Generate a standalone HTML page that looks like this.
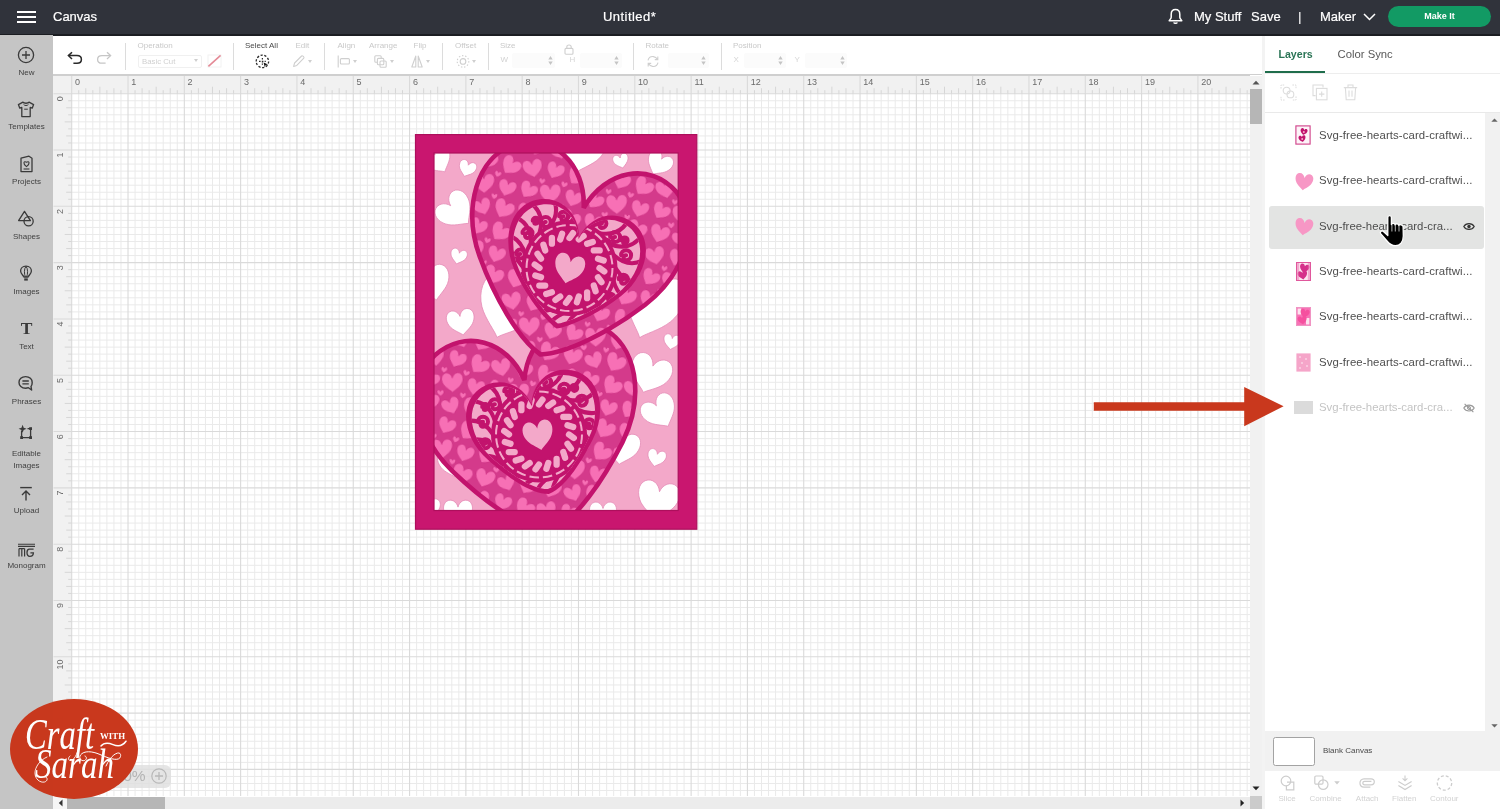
<!DOCTYPE html>
<html>
<head>
<meta charset="utf-8">
<title>Canvas</title>
<style>
*{box-sizing:border-box;margin:0;padding:0}
html,body{width:1500px;height:809px;overflow:hidden;background:#fff;font-family:"Liberation Sans",sans-serif;}
.abs{position:absolute}
body>*{will-change:transform;opacity:0.999}
#topbar{position:absolute;left:0;top:0;width:1500px;height:35.6px;background:#30333b;border-bottom:2px solid #1b1d22}
#topbar .t{position:absolute;color:#fff;-webkit-text-stroke:0.2px #fff;font-size:13px;line-height:16px;white-space:nowrap;top:8.6px}
#sidebar{position:absolute;left:0;top:35px;width:53px;height:774px;background:#c5c5c5}
.sbl{position:absolute;left:0;width:53px;text-align:center;font-size:8px;line-height:10px;color:#3f3f3f}
.sbi{position:absolute;left:0;width:53px;text-align:center}
#toolbar{position:absolute;left:53px;top:36px;width:1210px;height:39px;background:#fff;border-bottom:1px solid #cfcfcf}
.tl{position:absolute;font-size:8px;line-height:9px;color:#c9c9c9;top:4.8px;white-space:nowrap}
.sep{position:absolute;top:7px;height:27px;width:1px;background:#dcdcdc}
.ti{position:absolute}
.car{position:absolute;width:0;height:0;border-left:2.3px solid transparent;border-right:2.3px solid transparent;border-top:3px solid #cfcfcf}
.spin{position:absolute;width:5px;height:11px}
#canvas{position:absolute;left:53px;top:75px;overflow:hidden}
#panel{position:absolute;left:1265px;top:36px;width:235px;height:773px;background:#fff}
.row{position:absolute;left:54px;font-size:11.4px;line-height:13px;color:#4e4e4e;white-space:nowrap}
.bl{position:absolute;font-size:8px;line-height:10px;color:#d2d2d2;top:758px;white-space:nowrap;text-align:center}
</style>
</head>
<body>
<div id="topbar">
<div class="abs" style="left:17px;top:10.5px;width:19px;height:2px;background:#fff"></div>
<div class="abs" style="left:17px;top:15.5px;width:19px;height:2px;background:#fff"></div>
<div class="abs" style="left:17px;top:20.5px;width:19px;height:2px;background:#fff"></div>
<div class="t" style="left:53px">Canvas</div>
<div class="t" style="left:603px;letter-spacing:0.45px">Untitled*</div>
<svg class="abs" style="left:1167px;top:8px" width="17" height="18" viewBox="0 0 17 18"><path d="M8.5 1.6 C5.6 1.6 4.2 3.8 4.2 6.4 V9.2 C4.2 10.6 2.6 11.6 2.2 12.8 H14.8 C14.4 11.6 12.8 10.6 12.8 9.2 V6.4 C12.8 3.8 11.4 1.6 8.5 1.6 Z" fill="none" stroke="#fff" stroke-width="1.5" stroke-linejoin="round"/><path d="M6.8 14.3 C7 15.6 10 15.6 10.2 14.3" fill="none" stroke="#fff" stroke-width="1.4"/></svg>
<div class="t" style="left:1194px">My Stuff</div>
<div class="t" style="left:1251px">Save</div>
<div class="t" style="left:1298px;color:#e6e6e6">|</div>
<div class="t" style="left:1320px">Maker</div>
<svg class="abs" style="left:1363px;top:13px" width="13" height="8" viewBox="0 0 13 8"><path d="M1 1 L6.5 6.5 L12 1" fill="none" stroke="#fff" stroke-width="1.5"/></svg>
<div class="abs" style="left:1388px;top:6px;width:103px;height:21px;border-radius:11px;background:#129a64;color:#fff;font-size:9px;font-weight:bold;line-height:21px;text-align:center">Make It</div>
</div>
<div id="sidebar">
<svg class="abs" style="left:16px;top:9.5px" width="20" height="20" viewBox="0 0 20 20"><circle cx="10" cy="10" r="7.6" fill="none" stroke="#3a3a3a" stroke-width="1.3"/><path d="M10 6 V14 M6 10 H14" stroke="#3a3a3a" stroke-width="1.3"/></svg>
<div class="sbl" style="top:32.7px">New</div>
<svg class="abs" style="left:17px;top:65.5px" width="18" height="17" viewBox="0 0 18 17"><path d="M6 1.2 C7 2.6 11 2.6 12 1.2 L16.6 3.6 L15.2 7.2 L13.2 6.4 V15.6 H4.8 V6.4 L2.8 7.2 L1.4 3.6 Z" fill="none" stroke="#3a3a3a" stroke-width="1.3" stroke-linejoin="round"/><path d="M6.5 3.2 C7.5 5 10.5 5 11.5 3.2" fill="none" stroke="#3a3a3a" stroke-width="1"/><path d="M7.2 8.2 H10.8" stroke="#3a3a3a" stroke-width="1"/></svg>
<div class="sbl" style="top:87px">Templates</div>
<svg class="abs" style="left:19px;top:120px" width="15" height="18" viewBox="0 0 15 18"><path d="M2 3.2 L10 1.2 L13 3.2 V16.6 H2 Z" fill="none" stroke="#3a3a3a" stroke-width="1.3" stroke-linejoin="round"/><path d="M7.5 11.6 C3.6 8.8 4.6 5.6 7.5 7.2 C10.4 5.6 11.4 8.8 7.5 11.6 Z" fill="none" stroke="#3a3a3a" stroke-width="1.1"/><path d="M4.6 14 H10.4" stroke="#3a3a3a" stroke-width="1.1"/></svg>
<div class="sbl" style="top:141.6px">Projects</div>
<svg class="abs" style="left:17px;top:175px" width="18" height="17" viewBox="0 0 18 17"><path d="M7.5 1.4 L13.4 10.6 H1.6 Z" fill="none" stroke="#3a3a3a" stroke-width="1.3" stroke-linejoin="round"/><circle cx="11.6" cy="11.2" r="4.6" fill="none" stroke="#3a3a3a" stroke-width="1.3"/></svg>
<div class="sbl" style="top:196.5px">Shapes</div>
<svg class="abs" style="left:19px;top:230px" width="14" height="17" viewBox="0 0 14 17"><path d="M7 1.2 C3.4 1.2 1.6 3.6 1.6 6 C1.6 8.6 4 10.2 5 12 H9 C10 10.2 12.4 8.6 12.4 6 C12.4 3.6 10.6 1.2 7 1.2 Z" fill="none" stroke="#3a3a3a" stroke-width="1.3"/><path d="M7 1.4 C5 3.4 5 9 6.4 12 M7 1.4 C9 3.4 9 9 7.6 12" fill="none" stroke="#3a3a3a" stroke-width="1"/><path d="M5.2 13.4 H8.8 V15.6 H5.2 Z" fill="#3a3a3a"/></svg>
<div class="sbl" style="top:251.8px">Images</div>
<div class="sbi" style="top:283px;font-family:'Liberation Serif',serif;font-size:17.5px;font-weight:bold;line-height:20px;color:#3a3a3a">T</div>
<div class="sbl" style="top:306.7px">Text</div>
<svg class="abs" style="left:17px;top:340px" width="18" height="17" viewBox="0 0 18 17"><path d="M8.6 1.6 C4.6 1.6 2 4.2 2 7.4 C2 10.6 4.6 13.2 8.6 13.2 C9.6 13.2 10.6 13 11.4 12.7 L14.6 15 L14 11.4 C14.8 10.4 15.2 9 15.2 7.4 C15.2 4.2 12.6 1.6 8.6 1.6 Z" fill="none" stroke="#3a3a3a" stroke-width="1.4" stroke-linejoin="round"/><path d="M5.4 6 H11.8 M5.4 8.8 H11.8" stroke="#3a3a3a" stroke-width="1.3"/></svg>
<div class="sbl" style="top:361.6px">Phrases</div>
<svg class="abs" style="left:17px;top:388.5px" width="18" height="18" viewBox="0 0 18 18"><path d="M4.6 6.5 V13.6 H13.6 V4.6 H10.5" fill="none" stroke="#3a3a3a" stroke-width="1.3"/><rect x="3.2" y="12.2" width="2.8" height="2.8" fill="#3a3a3a"/><rect x="12.2" y="12.2" width="2.8" height="2.8" fill="#3a3a3a"/><rect x="12.2" y="3.2" width="2.8" height="2.8" fill="#3a3a3a"/><path d="M5.6 0.8 L6.7 3.7 L9.6 4.8 L6.7 5.9 L5.6 8.8 L4.5 5.9 L1.6 4.8 L4.5 3.7 Z" fill="#3a3a3a"/></svg>
<div class="sbl" style="top:414.3px">Editable</div>
<div class="sbl" style="top:425.7px">Images</div>
<svg class="abs" style="left:18px;top:450.5px" width="16" height="16" viewBox="0 0 16 16"><path d="M2.2 1.6 H13.8" stroke="#3a3a3a" stroke-width="1.4"/><path d="M8 14.6 V5.4 M4 9 L8 5 L12 9" fill="none" stroke="#3a3a3a" stroke-width="1.4"/></svg>
<div class="sbl" style="top:470.5px">Upload</div>
<svg class="abs" style="left:17px;top:508px" width="19" height="15" viewBox="0 0 19 15"><path d="M1 1.2 H18 M1 3.4 H18" stroke="#3a3a3a" stroke-width="1.1"/><path d="M2 13.6 V5.4 M4.8 13.6 V5.4 M7.6 13.6 V5.4 M2 5.6 H7.6" fill="none" stroke="#3a3a3a" stroke-width="1.2"/><path d="M16.6 6.2 H12.4 C10.6 6.2 10 7.4 10 9.6 C10 12 10.8 13.4 12.8 13.4 C14.8 13.4 16.4 12.4 16.4 9.8 H13.4" fill="none" stroke="#3a3a3a" stroke-width="1.3"/></svg>
<div class="sbl" style="top:525.5px">Monogram</div>
</div>
<div id="toolbar">
<svg class="ti" style="left:14px;top:14.5px" width="16" height="14" viewBox="0 0 16 14"><path d="M1.6 4.6 H10 C12.6 4.6 14.4 6.2 14.4 8.4 C14.4 10.6 12.6 12.2 10 12.2 H6.4" fill="none" stroke="#2a2a2a" stroke-width="1.5"/><path d="M5 1.2 L1.4 4.6 L5 8" fill="none" stroke="#2a2a2a" stroke-width="1.5"/></svg>
<svg class="ti" style="left:43px;top:14.5px" width="16" height="14" viewBox="0 0 16 14"><path d="M14.4 4.6 H6 C3.4 4.6 1.6 6.2 1.6 8.4 C1.6 10.6 3.4 12.2 6 12.2 H9.6" fill="none" stroke="#c6c6c6" stroke-width="1.3"/><path d="M11 1.2 L14.6 4.6 L11 8" fill="none" stroke="#c6c6c6" stroke-width="1.3"/></svg>
<div class="sep" style="left:71.5px"></div>
<div class="tl" style="left:84.5px">Operation</div>
<div class="abs" style="left:85px;top:18.5px;width:64px;height:13.5px;border:1px solid #f0f0f0;border-radius:2px;font-size:7.8px;line-height:11px;color:#d0d0d0;padding-left:3px">Basic Cut</div>
<div class="car" style="left:141.1px;top:23.0px"></div>
<svg class="ti" style="left:154px;top:18px" width="15" height="14" viewBox="0 0 15 14"><rect x="1" y="1" width="13" height="12" fill="none" stroke="#f2f2f2" stroke-width="1"/><path d="M1.4 12.4 L13.6 1.4" stroke="#e48a96" stroke-width="1.6"/></svg>
<div class="sep" style="left:179.5px"></div>
<div class="tl" style="left:192px;color:#4a4a4a">Select All</div>
<svg class="ti" style="left:202px;top:18px" width="15" height="15" viewBox="0 0 15 15"><circle cx="7.4" cy="7.4" r="6.2" fill="none" stroke="#2a2a2a" stroke-width="1.3" stroke-dasharray="2.2 1.6"/><path d="M4 7.4 H10.8 M7.4 4 V10.8" stroke="#2a2a2a" stroke-width="1.2" stroke-dasharray="1.6 1.2"/><path d="M8.6 8.4 L13 10.4 L10.6 11 L9.8 13.2 Z" fill="#111"/></svg>
<div class="tl" style="left:242.5px">Edit</div>
<svg class="ti" style="left:239px;top:18px" width="14" height="14" viewBox="0 0 14 14"><path d="M1.6 12.4 L2.6 9 L9.6 2 C10.4 1.2 12.6 3.2 11.8 4.2 L4.8 11.4 Z" fill="none" stroke="#cfcfcf" stroke-width="1.1" stroke-linejoin="round"/></svg>
<div class="car" style="left:254.7px;top:23.5px"></div>
<div class="sep" style="left:270.5px"></div>
<div class="tl" style="left:284.5px">Align</div>
<svg class="ti" style="left:284px;top:18.5px" width="14" height="13" viewBox="0 0 14 13"><path d="M1.2 0.6 V12.4" stroke="#cfcfcf" stroke-width="1.1"/><rect x="3.4" y="3.6" width="9" height="5.4" rx="1" fill="none" stroke="#cfcfcf" stroke-width="1.1"/></svg>
<div class="car" style="left:300.2px;top:23.5px"></div>
<div class="tl" style="left:316px">Arrange</div>
<svg class="ti" style="left:320.5px;top:18.5px" width="13" height="13" viewBox="0 0 13 13"><rect x="0.8" y="0.8" width="6.4" height="6.4" rx="1" fill="none" stroke="#cfcfcf" stroke-width="1.1"/><rect x="3.4" y="3.4" width="6.4" height="6.4" rx="1" fill="#fff" stroke="#cfcfcf" stroke-width="1.1"/><rect x="6" y="6" width="6.2" height="6.2" rx="1" fill="none" stroke="#cfcfcf" stroke-width="1.1"/></svg>
<div class="car" style="left:336.7px;top:23.5px"></div>
<div class="tl" style="left:360.5px">Flip</div>
<svg class="ti" style="left:358px;top:18.5px" width="12" height="13" viewBox="0 0 12 13"><path d="M4.8 1 L0.8 12 H4.8 Z M7.2 1 L11.2 12 H7.2 Z" fill="none" stroke="#cfcfcf" stroke-width="1.1" stroke-linejoin="round"/></svg>
<div class="car" style="left:373.2px;top:23.5px"></div>
<div class="sep" style="left:389px"></div>
<div class="tl" style="left:402px">Offset</div>
<svg class="ti" style="left:402.5px;top:18px" width="14" height="15" viewBox="0 0 14 15"><circle cx="7" cy="7.4" r="2.8" fill="none" stroke="#cfcfcf" stroke-width="1.1"/><circle cx="7" cy="7.4" r="5.8" fill="none" stroke="#cfcfcf" stroke-width="1.1" stroke-dasharray="1.4 1.8"/></svg>
<div class="car" style="left:418.7px;top:23.5px"></div>
<div class="sep" style="left:434.5px"></div>
<div class="tl" style="left:447px">Size</div>
<div class="tl" style="left:447.5px;top:19.4px;color:#d2d2d2">W</div>
<div class="abs" style="left:459px;top:17px;width:43px;height:15px;background:#fbfbfb;border-radius:2px"></div>
<svg class="spin" style="left:494.5px;top:19.0px" viewBox="0 0 5 11"><path d="M0.3 4.4 L2.5 1 L4.7 4.4 Z M0.3 6.6 L2.5 10 L4.7 6.6 Z" fill="#c4c4c4"/></svg>
<svg class="ti" style="left:511px;top:8px" width="10" height="11" viewBox="0 0 10 11"><rect x="1" y="4.4" width="8" height="5.8" rx="1" fill="none" stroke="#cfcfcf" stroke-width="1.1"/><path d="M2.8 4.4 V3 C2.8 0.4 7.2 0.4 7.2 3 V4.4" fill="none" stroke="#cfcfcf" stroke-width="1.1"/></svg>
<div class="tl" style="left:516.5px;top:19.4px;color:#d6d6d6">H</div>
<div class="abs" style="left:527px;top:17px;width:42px;height:15px;background:#fbfbfb;border-radius:2px"></div>
<svg class="spin" style="left:560.9px;top:19.0px" viewBox="0 0 5 11"><path d="M0.3 4.4 L2.5 1 L4.7 4.4 Z M0.3 6.6 L2.5 10 L4.7 6.6 Z" fill="#c4c4c4"/></svg>
<div class="sep" style="left:580px"></div>
<div class="tl" style="left:592.5px">Rotate</div>
<svg class="ti" style="left:593px;top:19px" width="14" height="13" viewBox="0 0 14 13"><path d="M2 5.4 C2.6 2.8 5 1.4 7.4 1.6 C9.2 1.8 10.6 2.8 11.4 4.2 M11.8 1.4 V4.6 H8.8" fill="none" stroke="#cfcfcf" stroke-width="1.1"/><path d="M12 7.6 C11.4 10.2 9 11.6 6.6 11.4 C4.8 11.2 3.4 10.2 2.6 8.8 M2.2 11.6 V8.4 H5.2" fill="none" stroke="#cfcfcf" stroke-width="1.1"/></svg>
<div class="abs" style="left:615px;top:17px;width:41px;height:15px;background:#fbfbfb;border-radius:2px"></div>
<svg class="spin" style="left:648.1px;top:19.0px" viewBox="0 0 5 11"><path d="M0.3 4.4 L2.5 1 L4.7 4.4 Z M0.3 6.6 L2.5 10 L4.7 6.6 Z" fill="#c4c4c4"/></svg>
<div class="sep" style="left:667.5px"></div>
<div class="tl" style="left:680px">Position</div>
<div class="tl" style="left:680.5px;top:19.4px;color:#d6d6d6">X</div>
<div class="abs" style="left:691px;top:17px;width:42px;height:15px;background:#fbfbfb;border-radius:2px"></div>
<svg class="spin" style="left:725.2px;top:19.0px" viewBox="0 0 5 11"><path d="M0.3 4.4 L2.5 1 L4.7 4.4 Z M0.3 6.6 L2.5 10 L4.7 6.6 Z" fill="#c4c4c4"/></svg>
<div class="tl" style="left:741.5px;top:19.4px;color:#d6d6d6">Y</div>
<div class="abs" style="left:752px;top:17px;width:42px;height:15px;background:#fbfbfb;border-radius:2px"></div>
<svg class="spin" style="left:786.5px;top:19.0px" viewBox="0 0 5 11"><path d="M0.3 4.4 L2.5 1 L4.7 4.4 Z M0.3 6.6 L2.5 10 L4.7 6.6 Z" fill="#c4c4c4"/></svg>
</div>
<svg id="canvas" width="1197" height="721" viewBox="0 0 1197 721">
<rect x="0" y="0" width="1197" height="721" fill="#fff"/>
<rect x="0" y="0" width="1197" height="18.700000000000003" fill="#f1f1f1"/>
<rect x="0" y="0" width="18.700000000000003" height="721" fill="#f1f1f1"/>
<rect x="0" y="0" width="1197" height="1" fill="#cfcfcf"/>
<path d="M25.74 18.700000000000003V721M32.78 18.700000000000003V721M39.82 18.700000000000003V721M46.86 18.700000000000003V721M53.89 18.700000000000003V721M60.93 18.700000000000003V721M67.97 18.700000000000003V721M82.05 18.700000000000003V721M89.09 18.700000000000003V721M96.13 18.700000000000003V721M103.17 18.700000000000003V721M110.2 18.700000000000003V721M117.24 18.700000000000003V721M124.28 18.700000000000003V721M138.36 18.700000000000003V721M145.4 18.700000000000003V721M152.44 18.700000000000003V721M159.48 18.700000000000003V721M166.51 18.700000000000003V721M173.55 18.700000000000003V721M180.59 18.700000000000003V721M194.67 18.700000000000003V721M201.71 18.700000000000003V721M208.75 18.700000000000003V721M215.79 18.700000000000003V721M222.82 18.700000000000003V721M229.86 18.700000000000003V721M236.9 18.700000000000003V721M250.98 18.700000000000003V721M258.02 18.700000000000003V721M265.06 18.700000000000003V721M272.1 18.700000000000003V721M279.13 18.700000000000003V721M286.17 18.700000000000003V721M293.21 18.700000000000003V721M307.29 18.700000000000003V721M314.33 18.700000000000003V721M321.37 18.700000000000003V721M328.41 18.700000000000003V721M335.44 18.700000000000003V721M342.48 18.700000000000003V721M349.52 18.700000000000003V721M363.6 18.700000000000003V721M370.64 18.700000000000003V721M377.68 18.700000000000003V721M384.71 18.700000000000003V721M391.75 18.700000000000003V721M398.79 18.700000000000003V721M405.83 18.700000000000003V721M419.91 18.700000000000003V721M426.95 18.700000000000003V721M433.99 18.700000000000003V721M441.03 18.700000000000003V721M448.06 18.700000000000003V721M455.1 18.700000000000003V721M462.14 18.700000000000003V721M476.22 18.700000000000003V721M483.26 18.700000000000003V721M490.3 18.700000000000003V721M497.33 18.700000000000003V721M504.37 18.700000000000003V721M511.41 18.700000000000003V721M518.45 18.700000000000003V721M532.53 18.700000000000003V721M539.57 18.700000000000003V721M546.61 18.700000000000003V721M553.65 18.700000000000003V721M560.68 18.700000000000003V721M567.72 18.700000000000003V721M574.76 18.700000000000003V721M588.84 18.700000000000003V721M595.88 18.700000000000003V721M602.92 18.700000000000003V721M609.96 18.700000000000003V721M616.99 18.700000000000003V721M624.03 18.700000000000003V721M631.07 18.700000000000003V721M645.15 18.700000000000003V721M652.19 18.700000000000003V721M659.23 18.700000000000003V721M666.27 18.700000000000003V721M673.3 18.700000000000003V721M680.34 18.700000000000003V721M687.38 18.700000000000003V721M701.46 18.700000000000003V721M708.5 18.700000000000003V721M715.54 18.700000000000003V721M722.58 18.700000000000003V721M729.61 18.700000000000003V721M736.65 18.700000000000003V721M743.69 18.700000000000003V721M757.77 18.700000000000003V721M764.81 18.700000000000003V721M771.85 18.700000000000003V721M778.89 18.700000000000003V721M785.92 18.700000000000003V721M792.96 18.700000000000003V721M800.0 18.700000000000003V721M814.08 18.700000000000003V721M821.12 18.700000000000003V721M828.16 18.700000000000003V721M835.2 18.700000000000003V721M842.23 18.700000000000003V721M849.27 18.700000000000003V721M856.31 18.700000000000003V721M870.39 18.700000000000003V721M877.43 18.700000000000003V721M884.47 18.700000000000003V721M891.51 18.700000000000003V721M898.54 18.700000000000003V721M905.58 18.700000000000003V721M912.62 18.700000000000003V721M926.7 18.700000000000003V721M933.74 18.700000000000003V721M940.78 18.700000000000003V721M947.82 18.700000000000003V721M954.85 18.700000000000003V721M961.89 18.700000000000003V721M968.93 18.700000000000003V721M983.01 18.700000000000003V721M990.05 18.700000000000003V721M997.09 18.700000000000003V721M1004.13 18.700000000000003V721M1011.16 18.700000000000003V721M1018.2 18.700000000000003V721M1025.24 18.700000000000003V721M1039.32 18.700000000000003V721M1046.36 18.700000000000003V721M1053.4 18.700000000000003V721M1060.44 18.700000000000003V721M1067.47 18.700000000000003V721M1074.51 18.700000000000003V721M1081.55 18.700000000000003V721M1095.63 18.700000000000003V721M1102.67 18.700000000000003V721M1109.71 18.700000000000003V721M1116.75 18.700000000000003V721M1123.78 18.700000000000003V721M1130.82 18.700000000000003V721M1137.86 18.700000000000003V721M1151.94 18.700000000000003V721M1158.98 18.700000000000003V721M1166.02 18.700000000000003V721M1173.06 18.700000000000003V721M1180.09 18.700000000000003V721M1187.13 18.700000000000003V721M1194.17 18.700000000000003V721M18.700000000000003 25.74H1197M18.700000000000003 32.78H1197M18.700000000000003 39.82H1197M18.700000000000003 46.86H1197M18.700000000000003 53.89H1197M18.700000000000003 60.93H1197M18.700000000000003 67.97H1197M18.700000000000003 82.05H1197M18.700000000000003 89.09H1197M18.700000000000003 96.13H1197M18.700000000000003 103.17H1197M18.700000000000003 110.2H1197M18.700000000000003 117.24H1197M18.700000000000003 124.28H1197M18.700000000000003 138.36H1197M18.700000000000003 145.4H1197M18.700000000000003 152.44H1197M18.700000000000003 159.48H1197M18.700000000000003 166.51H1197M18.700000000000003 173.55H1197M18.700000000000003 180.59H1197M18.700000000000003 194.67H1197M18.700000000000003 201.71H1197M18.700000000000003 208.75H1197M18.700000000000003 215.79H1197M18.700000000000003 222.82H1197M18.700000000000003 229.86H1197M18.700000000000003 236.9H1197M18.700000000000003 250.98H1197M18.700000000000003 258.02H1197M18.700000000000003 265.06H1197M18.700000000000003 272.1H1197M18.700000000000003 279.13H1197M18.700000000000003 286.17H1197M18.700000000000003 293.21H1197M18.700000000000003 307.29H1197M18.700000000000003 314.33H1197M18.700000000000003 321.37H1197M18.700000000000003 328.41H1197M18.700000000000003 335.44H1197M18.700000000000003 342.48H1197M18.700000000000003 349.52H1197M18.700000000000003 363.6H1197M18.700000000000003 370.64H1197M18.700000000000003 377.68H1197M18.700000000000003 384.71H1197M18.700000000000003 391.75H1197M18.700000000000003 398.79H1197M18.700000000000003 405.83H1197M18.700000000000003 419.91H1197M18.700000000000003 426.95H1197M18.700000000000003 433.99H1197M18.700000000000003 441.03H1197M18.700000000000003 448.06H1197M18.700000000000003 455.1H1197M18.700000000000003 462.14H1197M18.700000000000003 476.22H1197M18.700000000000003 483.26H1197M18.700000000000003 490.3H1197M18.700000000000003 497.33H1197M18.700000000000003 504.37H1197M18.700000000000003 511.41H1197M18.700000000000003 518.45H1197M18.700000000000003 532.53H1197M18.700000000000003 539.57H1197M18.700000000000003 546.61H1197M18.700000000000003 553.65H1197M18.700000000000003 560.68H1197M18.700000000000003 567.72H1197M18.700000000000003 574.76H1197M18.700000000000003 588.84H1197M18.700000000000003 595.88H1197M18.700000000000003 602.92H1197M18.700000000000003 609.96H1197M18.700000000000003 616.99H1197M18.700000000000003 624.03H1197M18.700000000000003 631.07H1197M18.700000000000003 645.15H1197M18.700000000000003 652.19H1197M18.700000000000003 659.23H1197M18.700000000000003 666.27H1197M18.700000000000003 673.3H1197M18.700000000000003 680.34H1197M18.700000000000003 687.38H1197M18.700000000000003 701.46H1197M18.700000000000003 708.5H1197M18.700000000000003 715.54H1197" stroke="#eaeaea" stroke-width="1" fill="none"/>
<path d="M18.7 1V721M75.01 1V721M131.32 1V721M187.63 1V721M243.94 1V721M300.25 1V721M356.56 1V721M412.87 1V721M469.18 1V721M525.49 1V721M581.8 1V721M638.11 1V721M694.42 1V721M750.73 1V721M807.04 1V721M863.35 1V721M919.66 1V721M975.97 1V721M1032.28 1V721M1088.59 1V721M1144.9 1V721M0.5 18.7H1197M0.5 75.01H1197M0.5 131.32H1197M0.5 187.63H1197M0.5 243.94H1197M0.5 300.25H1197M0.5 356.56H1197M0.5 412.87H1197M0.5 469.18H1197M0.5 525.49H1197M0.5 581.8H1197M0.5 638.11H1197M0.5 694.42H1197" stroke="#dadada" stroke-width="1.1" fill="none"/>
<path d="M25.74 15.20V18.700000000000003M32.78 13.20V18.700000000000003M39.82 15.20V18.700000000000003M46.86 11.70V18.700000000000003M53.89 15.20V18.700000000000003M60.93 13.20V18.700000000000003M67.97 15.20V18.700000000000003M82.05 15.20V18.700000000000003M89.09 13.20V18.700000000000003M96.13 15.20V18.700000000000003M103.17 11.70V18.700000000000003M110.20 15.20V18.700000000000003M117.24 13.20V18.700000000000003M124.28 15.20V18.700000000000003M138.36 15.20V18.700000000000003M145.40 13.20V18.700000000000003M152.44 15.20V18.700000000000003M159.48 11.70V18.700000000000003M166.51 15.20V18.700000000000003M173.55 13.20V18.700000000000003M180.59 15.20V18.700000000000003M194.67 15.20V18.700000000000003M201.71 13.20V18.700000000000003M208.75 15.20V18.700000000000003M215.79 11.70V18.700000000000003M222.82 15.20V18.700000000000003M229.86 13.20V18.700000000000003M236.90 15.20V18.700000000000003M250.98 15.20V18.700000000000003M258.02 13.20V18.700000000000003M265.06 15.20V18.700000000000003M272.10 11.70V18.700000000000003M279.13 15.20V18.700000000000003M286.17 13.20V18.700000000000003M293.21 15.20V18.700000000000003M307.29 15.20V18.700000000000003M314.33 13.20V18.700000000000003M321.37 15.20V18.700000000000003M328.41 11.70V18.700000000000003M335.44 15.20V18.700000000000003M342.48 13.20V18.700000000000003M349.52 15.20V18.700000000000003M363.60 15.20V18.700000000000003M370.64 13.20V18.700000000000003M377.68 15.20V18.700000000000003M384.71 11.70V18.700000000000003M391.75 15.20V18.700000000000003M398.79 13.20V18.700000000000003M405.83 15.20V18.700000000000003M419.91 15.20V18.700000000000003M426.95 13.20V18.700000000000003M433.99 15.20V18.700000000000003M441.03 11.70V18.700000000000003M448.06 15.20V18.700000000000003M455.10 13.20V18.700000000000003M462.14 15.20V18.700000000000003M476.22 15.20V18.700000000000003M483.26 13.20V18.700000000000003M490.30 15.20V18.700000000000003M497.33 11.70V18.700000000000003M504.37 15.20V18.700000000000003M511.41 13.20V18.700000000000003M518.45 15.20V18.700000000000003M532.53 15.20V18.700000000000003M539.57 13.20V18.700000000000003M546.61 15.20V18.700000000000003M553.65 11.70V18.700000000000003M560.68 15.20V18.700000000000003M567.72 13.20V18.700000000000003M574.76 15.20V18.700000000000003M588.84 15.20V18.700000000000003M595.88 13.20V18.700000000000003M602.92 15.20V18.700000000000003M609.96 11.70V18.700000000000003M616.99 15.20V18.700000000000003M624.03 13.20V18.700000000000003M631.07 15.20V18.700000000000003M645.15 15.20V18.700000000000003M652.19 13.20V18.700000000000003M659.23 15.20V18.700000000000003M666.27 11.70V18.700000000000003M673.30 15.20V18.700000000000003M680.34 13.20V18.700000000000003M687.38 15.20V18.700000000000003M701.46 15.20V18.700000000000003M708.50 13.20V18.700000000000003M715.54 15.20V18.700000000000003M722.58 11.70V18.700000000000003M729.61 15.20V18.700000000000003M736.65 13.20V18.700000000000003M743.69 15.20V18.700000000000003M757.77 15.20V18.700000000000003M764.81 13.20V18.700000000000003M771.85 15.20V18.700000000000003M778.89 11.70V18.700000000000003M785.92 15.20V18.700000000000003M792.96 13.20V18.700000000000003M800.00 15.20V18.700000000000003M814.08 15.20V18.700000000000003M821.12 13.20V18.700000000000003M828.16 15.20V18.700000000000003M835.20 11.70V18.700000000000003M842.23 15.20V18.700000000000003M849.27 13.20V18.700000000000003M856.31 15.20V18.700000000000003M870.39 15.20V18.700000000000003M877.43 13.20V18.700000000000003M884.47 15.20V18.700000000000003M891.51 11.70V18.700000000000003M898.54 15.20V18.700000000000003M905.58 13.20V18.700000000000003M912.62 15.20V18.700000000000003M926.70 15.20V18.700000000000003M933.74 13.20V18.700000000000003M940.78 15.20V18.700000000000003M947.82 11.70V18.700000000000003M954.85 15.20V18.700000000000003M961.89 13.20V18.700000000000003M968.93 15.20V18.700000000000003M983.01 15.20V18.700000000000003M990.05 13.20V18.700000000000003M997.09 15.20V18.700000000000003M1004.13 11.70V18.700000000000003M1011.16 15.20V18.700000000000003M1018.20 13.20V18.700000000000003M1025.24 15.20V18.700000000000003M1039.32 15.20V18.700000000000003M1046.36 13.20V18.700000000000003M1053.40 15.20V18.700000000000003M1060.44 11.70V18.700000000000003M1067.47 15.20V18.700000000000003M1074.51 13.20V18.700000000000003M1081.55 15.20V18.700000000000003M1095.63 15.20V18.700000000000003M1102.67 13.20V18.700000000000003M1109.71 15.20V18.700000000000003M1116.75 11.70V18.700000000000003M1123.78 15.20V18.700000000000003M1130.82 13.20V18.700000000000003M1137.86 15.20V18.700000000000003M1151.94 15.20V18.700000000000003M1158.98 13.20V18.700000000000003M1166.02 15.20V18.700000000000003M1173.06 11.70V18.700000000000003M1180.09 15.20V18.700000000000003M1187.13 13.20V18.700000000000003M1194.17 15.20V18.700000000000003M15.20 25.74H18.700000000000003M13.20 32.78H18.700000000000003M15.20 39.82H18.700000000000003M11.70 46.86H18.700000000000003M15.20 53.89H18.700000000000003M13.20 60.93H18.700000000000003M15.20 67.97H18.700000000000003M15.20 82.05H18.700000000000003M13.20 89.09H18.700000000000003M15.20 96.13H18.700000000000003M11.70 103.17H18.700000000000003M15.20 110.20H18.700000000000003M13.20 117.24H18.700000000000003M15.20 124.28H18.700000000000003M15.20 138.36H18.700000000000003M13.20 145.40H18.700000000000003M15.20 152.44H18.700000000000003M11.70 159.48H18.700000000000003M15.20 166.51H18.700000000000003M13.20 173.55H18.700000000000003M15.20 180.59H18.700000000000003M15.20 194.67H18.700000000000003M13.20 201.71H18.700000000000003M15.20 208.75H18.700000000000003M11.70 215.79H18.700000000000003M15.20 222.82H18.700000000000003M13.20 229.86H18.700000000000003M15.20 236.90H18.700000000000003M15.20 250.98H18.700000000000003M13.20 258.02H18.700000000000003M15.20 265.06H18.700000000000003M11.70 272.10H18.700000000000003M15.20 279.13H18.700000000000003M13.20 286.17H18.700000000000003M15.20 293.21H18.700000000000003M15.20 307.29H18.700000000000003M13.20 314.33H18.700000000000003M15.20 321.37H18.700000000000003M11.70 328.41H18.700000000000003M15.20 335.44H18.700000000000003M13.20 342.48H18.700000000000003M15.20 349.52H18.700000000000003M15.20 363.60H18.700000000000003M13.20 370.64H18.700000000000003M15.20 377.68H18.700000000000003M11.70 384.71H18.700000000000003M15.20 391.75H18.700000000000003M13.20 398.79H18.700000000000003M15.20 405.83H18.700000000000003M15.20 419.91H18.700000000000003M13.20 426.95H18.700000000000003M15.20 433.99H18.700000000000003M11.70 441.03H18.700000000000003M15.20 448.06H18.700000000000003M13.20 455.10H18.700000000000003M15.20 462.14H18.700000000000003M15.20 476.22H18.700000000000003M13.20 483.26H18.700000000000003M15.20 490.30H18.700000000000003M11.70 497.33H18.700000000000003M15.20 504.37H18.700000000000003M13.20 511.41H18.700000000000003M15.20 518.45H18.700000000000003M15.20 532.53H18.700000000000003M13.20 539.57H18.700000000000003M15.20 546.61H18.700000000000003M11.70 553.65H18.700000000000003M15.20 560.68H18.700000000000003M13.20 567.72H18.700000000000003M15.20 574.76H18.700000000000003M15.20 588.84H18.700000000000003M13.20 595.88H18.700000000000003M15.20 602.92H18.700000000000003M11.70 609.96H18.700000000000003M15.20 616.99H18.700000000000003M13.20 624.03H18.700000000000003M15.20 631.07H18.700000000000003M15.20 645.15H18.700000000000003M13.20 652.19H18.700000000000003M15.20 659.23H18.700000000000003M11.70 666.27H18.700000000000003M15.20 673.30H18.700000000000003M13.20 680.34H18.700000000000003M15.20 687.38H18.700000000000003M15.20 701.46H18.700000000000003M13.20 708.50H18.700000000000003M15.20 715.54H18.700000000000003" stroke="#d6d6d6" stroke-width="1" fill="none"/>
<g font-family="Liberation Sans, sans-serif" font-size="9" fill="#6a6a6a">
<text x="22.0" y="10.1">0</text><text x="78.3" y="10.1">1</text><text x="134.6" y="10.1">2</text><text x="190.9" y="10.1">3</text><text x="247.2" y="10.1">4</text><text x="303.6" y="10.1">5</text><text x="359.9" y="10.1">6</text><text x="416.2" y="10.1">7</text><text x="472.5" y="10.1">8</text><text x="528.8" y="10.1">9</text><text x="585.1" y="10.1">10</text><text x="641.4" y="10.1">11</text><text x="697.7" y="10.1">12</text><text x="754.0" y="10.1">13</text><text x="810.3" y="10.1">14</text><text x="866.7" y="10.1">15</text><text x="923.0" y="10.1">16</text><text x="979.3" y="10.1">17</text><text x="1035.6" y="10.1">18</text><text x="1091.9" y="10.1">19</text><text x="1148.2" y="10.1">20</text>
<text transform="translate(9.8 21.3) rotate(-90)" text-anchor="end">0</text><text transform="translate(9.8 77.6) rotate(-90)" text-anchor="end">1</text><text transform="translate(9.8 133.9) rotate(-90)" text-anchor="end">2</text><text transform="translate(9.8 190.2) rotate(-90)" text-anchor="end">3</text><text transform="translate(9.8 246.5) rotate(-90)" text-anchor="end">4</text><text transform="translate(9.8 302.9) rotate(-90)" text-anchor="end">5</text><text transform="translate(9.8 359.2) rotate(-90)" text-anchor="end">6</text><text transform="translate(9.8 415.5) rotate(-90)" text-anchor="end">7</text><text transform="translate(9.8 471.8) rotate(-90)" text-anchor="end">8</text><text transform="translate(9.8 528.1) rotate(-90)" text-anchor="end">9</text><text transform="translate(9.8 584.4) rotate(-90)" text-anchor="end">10</text><text transform="translate(9.8 640.7) rotate(-90)" text-anchor="end">11</text><text transform="translate(9.8 697.0) rotate(-90)" text-anchor="end">12</text>
</g>
<!--ARTB--><g transform="translate(-53 -75)">
<defs>
<clipPath id="win"><rect x="434" y="153" width="244.2" height="357.5"/></clipPath>
<pattern id="hp" width="60" height="60" patternUnits="userSpaceOnUse" patternTransform="translate(3 5) rotate(9) scale(1.12)">
<rect width="60" height="60" fill="#d43a8b"/>
<path d="M8.8 6.6C8.4 3.1 10.8 0.2 14.0 0.9C17.2 1.7 18.5 5.8 17.4 9.7C16.4 13.0 13.3 16.5 12.9 17.9C11.7 17.1 7.0 16.4 4.1 14.5C0.8 12.3 -0.9 8.3 1.1 5.6C3.1 3.0 6.8 3.7 8.8 6.6Z" fill="#f770b5" stroke="#c01a72" stroke-width="0.7" stroke-opacity="0.55"/>
<path d="M30.8 5.8C32.4 3.0 35.7 2.1 37.7 4.3C39.7 6.6 38.5 10.3 35.7 12.6C33.2 14.5 29.1 15.5 28.0 16.4C27.6 15.1 24.5 12.2 23.3 9.3C22.0 5.9 22.8 2.1 25.7 1.1C28.5 0.2 30.9 2.6 30.8 5.8Z" fill="#f770b5" stroke="#c01a72" stroke-width="0.7" stroke-opacity="0.55"/>
<path d="M51.8 7.9C54.3 5.3 58.0 5.3 59.6 8.2C61.0 11.2 58.7 14.8 55.0 16.5C51.8 17.8 47.1 17.7 45.8 18.3C45.6 16.8 43.2 12.8 42.8 9.4C42.3 5.4 44.3 1.6 47.7 1.3C50.9 1.2 52.8 4.5 51.8 7.9Z" fill="#f770b5" stroke="#c01a72" stroke-width="0.7" stroke-opacity="0.55"/>
<path d="M10.4 27.0C12.4 24.5 15.8 24.2 17.4 26.7C19.0 29.3 17.2 32.8 13.9 34.5C11.2 36.0 6.9 36.3 5.8 36.9C5.5 35.6 3.0 32.2 2.3 29.1C1.6 25.5 3.1 21.9 6.1 21.4C9.0 21.1 11.0 23.9 10.4 27.0Z" fill="#f770b5" stroke="#c01a72" stroke-width="0.7" stroke-opacity="0.55"/>
<path d="M28.3 26.2C28.6 22.4 31.7 19.8 34.9 21.1C38.2 22.6 38.8 27.2 36.8 31.0C35.2 34.3 31.2 37.5 30.6 38.9C29.4 37.8 24.7 36.2 22.0 33.7C18.8 30.7 17.9 26.2 20.4 23.7C23.0 21.3 26.8 22.7 28.3 26.2Z" fill="#f770b5" stroke="#c01a72" stroke-width="0.7" stroke-opacity="0.55"/>
<path d="M50.6 27.8C51.9 24.8 55.1 23.7 57.3 25.6C59.4 27.8 58.6 31.6 55.9 34.1C53.7 36.2 49.6 37.6 48.7 38.5C48.1 37.3 44.8 34.7 43.3 31.9C41.7 28.6 42.2 24.7 45.0 23.5C47.7 22.4 50.3 24.6 50.6 27.8Z" fill="#f770b5" stroke="#c01a72" stroke-width="0.7" stroke-opacity="0.55"/>
<path d="M11.6 46.4C13.1 43.2 16.6 41.9 19.0 44.1C21.4 46.4 20.5 50.6 17.6 53.4C15.0 55.8 10.6 57.3 9.5 58.3C8.9 57.0 5.2 54.0 3.7 51.0C1.9 47.3 2.4 43.1 5.5 41.7C8.5 40.5 11.4 42.9 11.6 46.4Z" fill="#f770b5" stroke="#c01a72" stroke-width="0.7" stroke-opacity="0.55"/>
<path d="M29.4 48.2C28.5 45.1 30.2 42.1 33.1 42.2C36.1 42.4 38.0 45.9 37.6 49.6C37.2 52.7 35.0 56.3 34.8 57.6C33.6 57.1 29.3 57.2 26.5 56.0C23.1 54.5 21.0 51.2 22.3 48.4C23.7 45.8 27.1 45.9 29.4 48.2Z" fill="#f770b5" stroke="#c01a72" stroke-width="0.7" stroke-opacity="0.55"/>
<path d="M51.3 46.5C53.3 43.5 57.1 42.8 59.1 45.5C61.1 48.2 59.5 52.3 56.0 54.6C53.1 56.5 48.3 57.2 47.1 58.1C46.6 56.6 43.5 53.1 42.4 49.7C41.3 45.7 42.6 41.5 45.9 40.6C49.2 40.0 51.6 42.9 51.3 46.5Z" fill="#f770b5" stroke="#c01a72" stroke-width="0.7" stroke-opacity="0.55"/>
<path d="M20.0 18.8C20.3 17.7 21.3 17.1 22.2 17.6C23.1 18.3 23.1 19.7 22.3 20.7C21.6 21.6 20.3 22.4 20.0 22.7C19.7 22.4 18.4 21.6 17.7 20.7C16.9 19.7 16.9 18.3 17.8 17.6C18.7 17.1 19.7 17.7 20.0 18.8Z" fill="#f770b5" stroke="#c01a72" stroke-width="0.7" stroke-opacity="0.55"/>
<path d="M40.2 18.8C40.7 17.6 42.0 17.2 42.8 17.9C43.6 18.8 43.3 20.2 42.3 21.2C41.4 22.0 39.9 22.5 39.5 22.9C39.3 22.4 38.0 21.4 37.4 20.3C36.8 19.1 37.0 17.6 38.1 17.1C39.1 16.7 40.1 17.5 40.2 18.8Z" fill="#f770b5" stroke="#c01a72" stroke-width="0.7" stroke-opacity="0.55"/>
<path d="M19.8 39.8C19.9 38.5 20.9 37.7 21.9 38.1C23.0 38.6 23.2 40.1 22.6 41.3C22.0 42.4 20.7 43.4 20.5 43.9C20.1 43.5 18.6 43.0 17.7 42.2C16.7 41.2 16.4 39.8 17.2 38.9C18.0 38.2 19.3 38.6 19.8 39.8Z" fill="#f770b5" stroke="#c01a72" stroke-width="0.7" stroke-opacity="0.55"/>
<path d="M40.0 38.8C40.3 37.7 41.3 37.1 42.2 37.6C43.1 38.3 43.1 39.7 42.3 40.7C41.6 41.6 40.3 42.4 40.0 42.7C39.7 42.4 38.4 41.6 37.7 40.7C36.9 39.7 36.9 38.3 37.8 37.6C38.7 37.1 39.7 37.7 40.0 38.8Z" fill="#f770b5" stroke="#c01a72" stroke-width="0.7" stroke-opacity="0.55"/>
</pattern>
</defs>
<rect x="415.5" y="134.6" width="281.3" height="394.6" fill="#c9166f" stroke="#ad0f5c" stroke-width="1.2"/>
<rect x="434" y="153" width="244.2" height="357.5" fill="#f3a8c9"/>
<g clip-path="url(#win)">
<path d="M435.1 154.9C433.5 149.4 436.5 144.0 441.8 144.2C447.2 144.6 450.5 150.8 449.8 157.4C449.1 163.0 445.1 169.5 444.9 171.9C442.7 170.9 435.0 171.1 429.9 168.9C423.8 166.2 420.1 160.3 422.4 155.4C424.9 150.8 431.0 150.8 435.1 154.9Z" fill="#fff" stroke="#e48bb6" stroke-width="0.8"/>
<path d="M468.3 165.2C470.3 162.3 474.0 161.7 475.9 164.2C477.8 166.9 476.2 170.8 472.9 173.1C470.0 174.9 465.5 175.6 464.3 176.4C463.9 175.0 460.8 171.5 459.8 168.3C458.7 164.4 460.0 160.4 463.2 159.6C466.3 158.9 468.7 161.8 468.3 165.2Z" fill="#fff" stroke="#e48bb6" stroke-width="0.8"/>
<path d="M450.7 205.7C446.8 199.3 448.9 191.7 455.5 190.1C462.4 188.9 468.5 195.5 469.7 203.9C470.8 211.0 468.0 220.4 468.5 223.5C465.4 223.0 456.0 225.8 448.9 224.7C440.5 223.5 433.9 217.4 435.1 210.5C436.7 203.9 444.3 201.8 450.7 205.7Z" fill="#fff" stroke="#e48bb6" stroke-width="0.8"/>
<path d="M459.4 253.2C461.0 250.3 464.4 249.4 466.4 251.6C468.4 253.9 467.2 257.8 464.3 260.1C461.8 262.1 457.5 263.1 456.5 264.0C456.0 262.7 452.8 259.7 451.6 256.7C450.2 253.2 451.1 249.3 454.1 248.3C456.9 247.4 459.4 249.9 459.4 253.2Z" fill="#fff" stroke="#e48bb6" stroke-width="0.8"/>
<path d="M430.0 275.7C429.9 268.3 435.5 262.7 442.0 264.7C448.6 267.0 450.6 275.8 447.5 283.7C444.8 290.4 437.7 297.1 436.6 300.0C434.2 298.1 424.6 295.8 419.0 291.3C412.3 286.0 409.6 277.4 414.2 272.1C418.8 267.2 426.4 269.2 430.0 275.7Z" fill="#fff" stroke="#e48bb6" stroke-width="0.8"/>
<path d="M512.7 294.0C520.1 282.6 533.3 279.7 540.0 289.2C546.6 299.3 540.4 314.6 528.2 323.5C517.8 330.9 501.3 334.1 496.9 337.4C495.7 332.0 485.1 319.0 481.9 306.6C478.3 292.0 483.4 276.3 494.9 272.7C506.2 269.8 514.4 280.5 512.7 294.0Z" fill="#fff" stroke="#e48bb6" stroke-width="0.8"/>
<path d="M460.0 316.4C460.4 310.9 464.9 307.0 469.7 309.0C474.4 311.1 475.3 317.8 472.5 323.5C470.1 328.4 464.3 332.9 463.3 335.0C461.6 333.4 454.6 331.1 450.7 327.4C446.1 323.0 444.7 316.4 448.4 312.7C452.2 309.3 457.7 311.3 460.0 316.4Z" fill="#fff" stroke="#e48bb6" stroke-width="0.8"/>
<path d="M583.6 140.9C587.3 132.6 596.4 129.3 602.5 134.9C608.6 140.8 606.3 151.6 598.8 158.8C592.4 164.8 581.0 168.6 578.3 171.2C576.6 167.8 567.2 160.4 563.2 152.5C558.6 143.2 560.1 132.3 567.9 128.7C575.6 125.6 583.0 131.9 583.6 140.9Z" fill="#fff" stroke="#e48bb6" stroke-width="0.8"/>
<path d="M620.2 158.0C620.1 154.9 622.5 152.5 625.2 153.4C627.9 154.3 628.7 158.0 627.4 161.3C626.3 164.1 623.4 166.9 622.9 168.1C621.9 167.3 617.9 166.3 615.6 164.5C612.8 162.3 611.7 158.7 613.6 156.5C615.5 154.4 618.7 155.3 620.2 158.0Z" fill="#fff" stroke="#e48bb6" stroke-width="0.8"/>
<path d="M661.6 159.1C665.2 155.3 670.7 155.3 672.9 159.5C675.0 163.9 671.7 169.2 666.3 171.5C661.7 173.5 654.8 173.3 652.9 174.2C652.7 172.1 649.1 166.3 648.5 161.3C647.8 155.4 650.8 149.9 655.6 149.5C660.3 149.3 663.0 154.1 661.6 159.1Z" fill="#fff" stroke="#e48bb6" stroke-width="0.8"/>
<path d="M657.6 290.8C665.4 278.3 678.2 274.8 683.9 284.7C689.5 295.3 682.5 311.9 670.3 321.9C659.9 330.2 644.0 334.1 639.6 337.8C638.7 332.1 629.6 318.6 627.4 305.4C625.0 289.8 630.9 272.8 642.1 268.6C653.1 265.1 660.2 276.3 657.6 290.8Z" fill="#fff" stroke="#e48bb6" stroke-width="0.8"/>
<path d="M672.3 338.5C673.6 335.5 676.9 334.3 679.2 336.3C681.4 338.5 680.5 342.4 677.8 345.0C675.5 347.2 671.3 348.6 670.3 349.5C669.7 348.3 666.3 345.6 664.9 342.7C663.2 339.3 663.7 335.4 666.6 334.1C669.4 332.9 672.1 335.2 672.3 338.5Z" fill="#fff" stroke="#e48bb6" stroke-width="0.8"/>
<path d="M652.9 366.1C657.5 359.3 666.1 357.7 670.8 363.7C675.3 370.0 671.5 379.3 663.6 384.5C656.9 388.9 646.1 390.5 643.3 392.4C642.4 389.1 635.1 380.9 632.8 373.3C630.1 364.2 633.2 354.7 640.7 352.7C648.1 351.2 653.7 357.9 652.9 366.1Z" fill="#fff" stroke="#e48bb6" stroke-width="0.8"/>
<path d="M656.4 405.8C654.5 399.1 658.2 392.6 664.6 392.8C671.2 393.4 675.2 400.9 674.3 408.9C673.5 415.6 668.6 423.5 668.3 426.4C665.7 425.2 656.4 425.5 650.1 422.8C642.8 419.6 638.2 412.4 641.1 406.4C644.1 400.8 651.6 400.8 656.4 405.8Z" fill="#fff" stroke="#e48bb6" stroke-width="0.8"/>
<path d="M623.2 441.0C626.1 434.6 633.1 432.0 637.9 436.3C642.6 440.9 640.8 449.2 635.0 454.8C630.0 459.4 621.2 462.4 619.1 464.4C617.8 461.8 610.6 456.0 607.5 449.9C603.9 442.7 605.1 434.3 611.1 431.6C617.0 429.2 622.7 434.0 623.2 441.0Z" fill="#fff" stroke="#e48bb6" stroke-width="0.8"/>
<path d="M657.4 454.3C659.2 451.1 663.0 450.1 665.3 452.6C667.6 455.2 666.2 459.5 662.9 462.2C660.1 464.4 655.3 465.5 654.1 466.5C653.6 465.1 650.0 461.7 648.7 458.4C647.1 454.4 648.1 450.0 651.4 448.8C654.6 447.8 657.4 450.6 657.4 454.3Z" fill="#fff" stroke="#e48bb6" stroke-width="0.8"/>
<path d="M659.5 491.7C662.8 484.2 671.1 481.2 676.7 486.2C682.2 491.7 680.1 501.5 673.2 508.0C667.4 513.4 657.1 516.9 654.6 519.3C653.1 516.2 644.6 509.4 640.9 502.3C636.8 493.8 638.1 483.9 645.2 480.7C652.2 477.8 658.9 483.5 659.5 491.7Z" fill="#fff" stroke="#e48bb6" stroke-width="0.8"/>
<path d="M603.0 508.5C604.3 503.3 609.2 500.5 613.4 503.1C617.6 505.9 617.3 512.4 613.7 517.4C610.5 521.5 604.3 524.9 603.0 526.7C601.7 524.9 595.5 521.5 592.3 517.4C588.7 512.4 588.4 505.9 592.6 503.1C596.8 500.5 601.7 503.3 603.0 508.5Z" fill="#fff" stroke="#e48bb6" stroke-width="0.8"/>
<path d="M453.8 456.4C454.3 449.8 459.7 445.3 465.3 447.5C470.9 450.1 472.0 458.1 468.6 464.8C465.8 470.5 458.9 476.0 457.7 478.4C455.8 476.5 447.5 473.8 442.8 469.4C437.3 464.2 435.6 456.3 440.1 452.0C444.5 447.9 451.1 450.4 453.8 456.4Z" fill="#fff" stroke="#e48bb6" stroke-width="0.8"/>
<path d="M458.0 507.1C459.4 501.5 464.7 498.4 469.2 501.2C473.7 504.3 473.4 511.3 469.5 516.6C466.1 521.1 459.4 524.8 458.0 526.7C456.6 524.8 449.9 521.1 446.5 516.6C442.6 511.3 442.3 504.3 446.8 501.2C451.3 498.4 456.6 501.5 458.0 507.1Z" fill="#fff" stroke="#e48bb6" stroke-width="0.8"/>
<path d="M430.0 503.8C431.0 499.8 434.8 497.6 438.0 499.6C441.2 501.8 441.0 506.8 438.2 510.6C435.8 513.8 431.0 516.4 430.0 517.8C429.0 516.4 424.2 513.8 421.8 510.6C419.0 506.8 418.8 501.8 422.0 499.6C425.2 497.6 429.0 499.8 430.0 503.8Z" fill="#fff" stroke="#e48bb6" stroke-width="0.8"/>
<path d="M524.4 380.1C527.6 336.4 564.0 311.8 600.8 327.2C637.9 344.6 644.7 397.4 622.5 442.2C603.3 480.0 576.5 519.8 550.3 532.2C521.5 529.1 483.0 500.5 452.4 471.1C416.6 436.2 405.6 384.1 434.8 355.4C464.5 328.8 506.9 339.9 524.4 380.1Z" fill="url(#hp)" stroke="#c2136d" stroke-width="4.6"/>
<clipPath id="l2"><path d="M532.0 406.6C533.5 382.8 554.1 369.4 575.1 377.1C596.3 385.9 600.6 414.5 588.3 439.1C577.6 459.9 564.2 482.2 547.9 489.1C530.1 488.8 509.4 473.1 491.8 457.7C471.2 439.4 464.6 411.3 481.0 395.3C497.6 380.3 521.7 385.1 532.0 406.6Z"/></clipPath>
<path d="M531.5 404.1C533.1 378.2 555.5 363.7 578.4 372.1C601.4 381.7 606.1 412.8 592.7 439.6C581.2 462.3 566.6 486.6 548.8 494.1C529.5 493.8 507.0 476.6 487.9 459.8C465.5 439.8 458.2 409.3 476.1 391.7C494.2 375.5 520.4 380.7 531.5 404.1Z" fill="#c2136d"/>
<g clip-path="url(#l2)">
<rect x="457.20000000000005" y="353.7" width="160" height="160" fill="#f3a8c9"/>
<g fill="none" stroke="#c2136d" stroke-width="4" stroke-linecap="round">
<path d="M585.0 434.5Q598.9 457.0 624.6 443.1"/><path d="M583.1 447.5Q590.1 473.0 618.7 466.8"/><path d="M577.7 459.4Q577.2 485.8 606.3 488.0"/><path d="M569.1 469.3Q561.2 494.5 588.5 504.8"/><path d="M558.1 476.3Q543.4 498.4 566.7 515.9"/><path d="M545.5 480.0Q525.2 497.0 542.7 520.4"/><path d="M532.5 480.0Q508.2 490.6 518.3 518.0"/><path d="M519.9 476.3Q493.6 479.6 495.6 508.8"/><path d="M508.9 469.3Q482.7 465.0 476.5 493.5"/><path d="M500.3 459.4Q476.4 447.9 462.4 473.5"/><path d="M494.9 447.5Q475.2 429.7 454.5 450.4"/><path d="M493.0 434.5Q479.1 412.0 453.4 425.9"/><path d="M494.9 421.5Q487.9 396.0 459.3 402.2"/><path d="M500.3 409.6Q500.8 383.2 471.7 381.0"/><path d="M508.9 399.7Q516.8 374.5 489.5 364.2"/><path d="M519.9 392.7Q534.6 370.6 511.3 353.1"/><path d="M532.5 389.0Q552.8 372.0 535.3 348.6"/><path d="M545.5 389.0Q569.8 378.4 559.7 351.0"/><path d="M558.1 392.7Q584.4 389.4 582.4 360.2"/><path d="M569.1 399.7Q595.3 404.0 601.5 375.5"/><path d="M577.7 409.6Q601.6 421.1 615.6 395.5"/><path d="M583.1 421.5Q602.8 439.3 623.5 418.6"/><path d="M489.9 404.2a5 5 0 1 1 5 5a2.5 2.5 0 1 1 0 -5.0"/><path d="M504.2 391.3a4.5 4.5 0 1 1 4.5 4.5a2.2 2.2 0 1 1 0 -4.5"/><path d="M478.0 421.7a5 5 0 1 1 5 5a2.5 2.5 0 1 1 0 -5.0"/><path d="M559.2 388.8a5 5 0 1 1 5 5a2.5 2.5 0 1 1 0 -5.0"/><path d="M542.1 382.0a4.5 4.5 0 1 1 4.5 4.5a2.2 2.2 0 1 1 0 -4.5"/><path d="M576.8 400.7a5 5 0 1 1 5 5a2.5 2.5 0 1 1 0 -5.0"/><path d="M480.7 443.7a4.5 4.5 0 1 1 4.5 4.5a2.2 2.2 0 1 1 0 -4.5"/><path d="M584.7 423.7a4.5 4.5 0 1 1 4.5 4.5a2.2 2.2 0 1 1 0 -4.5"/><path d="M494.2 463.6a4 4 0 1 1 4 4a2.0 2.0 0 1 1 0 -4.0"/><path d="M581.4 445.8a4 4 0 1 1 4 4a2.0 2.0 0 1 1 0 -4.0"/><path d="M499.6 409.7a3.5 3.5 0 1 1 3.5 3.5a1.8 1.8 0 1 1 0 -3.5"/><path d="M555.3 398.0a3.5 3.5 0 1 1 3.5 3.5a1.8 1.8 0 1 1 0 -3.5"/><path d="M482.2 407.0a3 3 0 1 1 3 3a1.5 1.5 0 1 1 0 -3.0"/><path d="M571.2 387.9a3 3 0 1 1 3 3a1.5 1.5 0 1 1 0 -3.0"/><path d="M518.0 392.0a3 3 0 1 1 3 3a1.5 1.5 0 1 1 0 -3.0"/><path d="M533.5 388.0a3 3 0 1 1 3 3a1.5 1.5 0 1 1 0 -3.0"/></g>
<circle cx="539.0" cy="434.5" r="48" fill="#c2136d"/>
<circle cx="539.0" cy="434.5" r="43" fill="none" stroke="#f3a8c9" stroke-width="2" stroke-dasharray="9.5 4"/>
<g fill="none" stroke="#f3a8c9" stroke-width="6.3" stroke-linecap="round">
<path d="M569.0 434.5L573.8 438.0"/><path d="M567.5 443.8L571.0 448.6"/><path d="M563.3 452.1L565.1 457.8"/><path d="M556.6 458.8L556.6 464.7"/><path d="M548.3 463.0L546.4 468.7"/><path d="M539.0 464.5L535.5 469.3"/><path d="M529.7 463.0L524.9 466.5"/><path d="M521.4 458.8L515.7 460.6"/><path d="M514.7 452.1L508.8 452.1"/><path d="M510.5 443.8L504.8 441.9"/><path d="M509.0 434.5L504.2 431.0"/><path d="M510.5 425.2L507.0 420.4"/><path d="M514.7 416.9L512.9 411.2"/><path d="M521.4 410.2L521.4 404.3"/><path d="M529.7 406.0L531.6 400.3"/><path d="M539.0 404.5L542.5 399.7"/><path d="M548.3 406.0L553.1 402.5"/><path d="M556.6 410.2L562.3 408.4"/><path d="M563.3 416.9L569.2 416.9"/><path d="M567.5 425.2L573.2 427.1"/></g>
<circle cx="539.0" cy="434.5" r="25" fill="#c2136d"/>
<path d="M537.3 428.6C537.5 422.2 542.3 417.9 547.4 420.0C552.6 422.5 553.8 430.2 550.9 436.7C548.5 442.2 542.4 447.5 541.4 449.9C539.5 448.1 531.9 445.4 527.6 441.2C522.5 436.2 520.7 428.6 524.6 424.4C528.6 420.5 534.7 422.8 537.3 428.6Z" fill="#f3a8c9" />
</g>
<path d="M583.7 207.9C605.8 169.8 649.9 161.6 676.1 191.6C701.7 223.7 684.6 274.3 644.9 305.0C611.1 330.7 567.8 353.4 540.5 354.5C518.2 338.8 494.1 296.3 479.6 256.3C462.8 209.1 475.9 157.2 514.8 144.1C553.1 133.1 585.7 163.9 583.7 207.9Z" fill="url(#hp)" stroke="#c2136d" stroke-width="4.6"/>
<clipPath id="l1"><path d="M578.5 239.3C590.2 217.5 615.4 213.3 631.8 229.6C647.9 247.1 639.5 275.8 617.3 293.8C598.3 308.8 572.3 321.4 557.8 323.5C545.9 314.9 528.7 291.7 518.9 269.6C507.5 243.4 513.4 214.1 535.8 206.0C557.8 199.1 578.2 214.6 578.5 239.3Z"/></clipPath>
<path d="M579.1 236.9C591.8 213.3 619.2 208.6 636.9 226.4C654.3 245.4 645.2 276.6 621.1 296.1C600.5 312.5 572.3 326.2 556.6 328.5C543.7 319.1 525.1 293.9 514.4 269.9C502.1 241.4 508.5 209.6 532.8 200.8C556.7 193.3 578.8 210.1 579.1 236.9Z" fill="#c2136d"/>
<g clip-path="url(#l1)">
<rect x="491.79999999999995" y="186.60000000000002" width="160" height="160" fill="#f3a8c9"/>
<g fill="none" stroke="#c2136d" stroke-width="4" stroke-linecap="round">
<path d="M615.5 268.0Q629.4 290.5 655.1 276.6"/><path d="M613.6 281.0Q620.6 306.5 649.2 300.3"/><path d="M608.2 292.9Q607.7 319.3 636.8 321.5"/><path d="M599.6 302.8Q591.7 328.0 619.0 338.3"/><path d="M588.6 309.8Q573.9 331.9 597.2 349.4"/><path d="M576.0 313.5Q555.7 330.5 573.2 353.9"/><path d="M563.0 313.5Q538.7 324.1 548.8 351.5"/><path d="M550.4 309.8Q524.1 313.1 526.1 342.3"/><path d="M539.4 302.8Q513.2 298.5 507.0 327.0"/><path d="M530.8 292.9Q506.9 281.4 492.9 307.0"/><path d="M525.4 281.0Q505.7 263.2 485.0 283.9"/><path d="M523.5 268.0Q509.6 245.5 483.9 259.4"/><path d="M525.4 255.0Q518.4 229.5 489.8 235.7"/><path d="M530.8 243.1Q531.3 216.7 502.2 214.5"/><path d="M539.4 233.2Q547.3 208.0 520.0 197.7"/><path d="M550.4 226.2Q565.1 204.1 541.8 186.6"/><path d="M563.0 222.5Q583.3 205.5 565.8 182.1"/><path d="M576.0 222.5Q600.3 211.9 590.2 184.5"/><path d="M588.6 226.2Q614.9 222.9 612.9 193.7"/><path d="M599.6 233.2Q625.8 237.5 632.0 209.0"/><path d="M608.2 243.1Q632.1 254.6 646.1 229.0"/><path d="M613.6 255.0Q633.3 272.8 654.0 252.1"/><path d="M540.7 222.1a5 5 0 1 1 5 5a2.5 2.5 0 1 1 0 -5.0"/><path d="M559.1 216.2a4.5 4.5 0 1 1 4.5 4.5a2.2 2.2 0 1 1 0 -4.5"/><path d="M522.5 233.1a5 5 0 1 1 5 5a2.5 2.5 0 1 1 0 -5.0"/><path d="M610.1 237.1a5 5 0 1 1 5 5a2.5 2.5 0 1 1 0 -5.0"/><path d="M597.4 223.5a4.5 4.5 0 1 1 4.5 4.5a2.2 2.2 0 1 1 0 -4.5"/><path d="M621.1 255.2a5 5 0 1 1 5 5a2.5 2.5 0 1 1 0 -5.0"/><path d="M515.8 254.0a4.5 4.5 0 1 1 4.5 4.5a2.2 2.2 0 1 1 0 -4.5"/><path d="M618.8 279.2a4.5 4.5 0 1 1 4.5 4.5a2.2 2.2 0 1 1 0 -4.5"/><path d="M519.8 277.5a4 4 0 1 1 4 4a2.0 2.0 0 1 1 0 -4.0"/><path d="M606.5 297.7a4 4 0 1 1 4 4a2.0 2.0 0 1 1 0 -4.0"/><path d="M547.3 230.5a3.5 3.5 0 1 1 3.5 3.5a1.8 1.8 0 1 1 0 -3.5"/><path d="M602.9 243.2a3.5 3.5 0 1 1 3.5 3.5a1.8 1.8 0 1 1 0 -3.5"/><path d="M532.7 220.7a3 3 0 1 1 3 3a1.5 1.5 0 1 1 0 -3.0"/><path d="M621.6 240.4a3 3 0 1 1 3 3a1.5 1.5 0 1 1 0 -3.0"/><path d="M571.5 222.0a3 3 0 1 1 3 3a1.5 1.5 0 1 1 0 -3.0"/><path d="M587.3 224.8a3 3 0 1 1 3 3a1.5 1.5 0 1 1 0 -3.0"/></g>
<circle cx="569.5" cy="268.0" r="48" fill="#c2136d"/>
<circle cx="569.5" cy="268.0" r="43" fill="none" stroke="#f3a8c9" stroke-width="2" stroke-dasharray="9.5 4"/>
<g fill="none" stroke="#f3a8c9" stroke-width="6.3" stroke-linecap="round">
<path d="M599.5 268.0L604.3 271.5"/><path d="M598.0 277.3L601.5 282.1"/><path d="M593.8 285.6L595.6 291.3"/><path d="M587.1 292.3L587.1 298.2"/><path d="M578.8 296.5L576.9 302.2"/><path d="M569.5 298.0L566.0 302.8"/><path d="M560.2 296.5L555.4 300.0"/><path d="M551.9 292.3L546.2 294.1"/><path d="M545.2 285.6L539.3 285.6"/><path d="M541.0 277.3L535.3 275.4"/><path d="M539.5 268.0L534.7 264.5"/><path d="M541.0 258.7L537.5 253.9"/><path d="M545.2 250.4L543.4 244.7"/><path d="M551.9 243.7L551.9 237.8"/><path d="M560.2 239.5L562.1 233.8"/><path d="M569.5 238.0L573.0 233.2"/><path d="M578.8 239.5L583.6 236.0"/><path d="M587.1 243.7L592.8 241.9"/><path d="M593.8 250.4L599.7 250.4"/><path d="M598.0 258.7L603.7 260.6"/></g>
<circle cx="569.5" cy="268.0" r="25" fill="#c2136d"/>
<path d="M570.6 262.2C573.4 256.5 579.6 254.5 583.4 258.6C587.1 263.0 584.9 270.5 579.6 275.2C575.0 279.2 567.3 281.5 565.4 283.3C564.5 280.8 558.7 275.2 556.5 269.6C554.0 262.9 555.5 255.3 560.8 253.1C566.1 251.2 570.6 255.8 570.6 262.2Z" fill="#f3a8c9" />
</g>
</g>
<rect x="434" y="153" width="244.2" height="357.5" fill="none" stroke="#ad0f5c" stroke-width="1.2"/>
</g>
<!--ARTE-->
</svg>
<div class="abs" style="left:1250px;top:76px;width:12px;height:720px;background:#f1f1f1"></div>
<div class="abs" style="left:1250px;top:88.5px;width:12px;height:35px;background:#b6b6b6"></div>
<svg class="abs" style="left:1252px;top:80px" width="8" height="5" viewBox="0 0 8 5"><path d="M0.5 4.5 L4 0.8 L7.5 4.5 Z" fill="#555"/></svg>
<svg class="abs" style="left:1252px;top:786px" width="8" height="5" viewBox="0 0 8 5"><path d="M0.5 0.5 L4 4.2 L7.5 0.5 Z" fill="#222"/></svg>
<div class="abs" style="left:53px;top:796.5px;width:1210px;height:12.5px;background:#ececec"></div>
<div class="abs" style="left:53px;top:796.5px;width:14px;height:12.5px;background:#f6f6f6"></div>
<div class="abs" style="left:67px;top:796.5px;width:98px;height:12.5px;background:#b6b6b6"></div>
<svg class="abs" style="left:58px;top:799px" width="5" height="8" viewBox="0 0 5 8"><path d="M4.5 0.5 L0.8 4 L4.5 7.5 Z" fill="#333"/></svg>
<svg class="abs" style="left:1240px;top:799px" width="5" height="8" viewBox="0 0 5 8"><path d="M0.5 0.5 L4.2 4 L0.5 7.5 Z" fill="#222"/></svg>
<div class="abs" style="left:1250px;top:796px;width:12px;height:13px;background:#cbcbcb"></div>
<div class="abs" style="left:1262px;top:36px;width:3px;height:773px;background:#f3f3f3"></div>

<div id="panel">
<div class="abs" style="left:13.5px;top:12px;font-size:10.6px;line-height:13px;font-weight:bold;color:#2a7455">Layers</div>
<div class="abs" style="left:72.5px;top:12px;font-size:11.3px;line-height:13px;color:#585858">Color Sync</div>
<div class="abs" style="left:0;top:36.6px;width:235px;height:1px;background:#ededed"></div>
<div class="abs" style="left:0;top:35px;width:59.5px;height:2.4px;background:#1f6d4c"></div>
<svg class="abs" style="left:14.5px;top:48px" width="17" height="17" viewBox="0 0 17 17"><path d="M1 4.6 V1 H4.6 M12.4 1 H16 V4.6 M16 12.4 V16 H12.4 M4.6 16 H1 V12.4" fill="none" stroke="#dcdcdc" stroke-width="1" stroke-dasharray="1.6 1"/><circle cx="6.6" cy="6.6" r="3.4" fill="none" stroke="#dcdcdc" stroke-width="1.1"/><circle cx="10.4" cy="10.4" r="3.4" fill="none" stroke="#dcdcdc" stroke-width="1.1"/></svg>
<svg class="abs" style="left:46.5px;top:48px" width="16" height="17" viewBox="0 0 16 17"><path d="M3.6 11.6 H1 V1 H11 V3.6" fill="none" stroke="#dcdcdc" stroke-width="1.1"/><rect x="4.4" y="4.4" width="10.6" height="11.4" fill="none" stroke="#dcdcdc" stroke-width="1.1"/><path d="M9.7 7.4 V12.8 M7 10.1 H12.4" stroke="#dcdcdc" stroke-width="1.1"/></svg>
<svg class="abs" style="left:78px;top:48px" width="15" height="17" viewBox="0 0 15 17"><path d="M0.8 3.6 H14.2 M5 3.4 V1 H10 V3.4 M2.4 3.8 L3.2 15.8 H11.8 L12.6 3.8 M6 6.6 V12.8 M9 6.6 V12.8" fill="none" stroke="#dcdcdc" stroke-width="1.1"/></svg>
<div class="abs" style="left:0;top:76px;width:235px;height:1px;background:#e9e9e9"></div>
<div class="abs" style="left:219.5px;top:77px;width:15.5px;height:618px;background:#f1f1f1"></div>
<svg class="abs" style="left:225.5px;top:82px" width="7" height="4" viewBox="0 0 7 4"><path d="M0.3 3.8 L3.5 0.4 L6.7 3.8 Z" fill="#666"/></svg>
<svg class="abs" style="left:225.5px;top:687.5px" width="7" height="4" viewBox="0 0 7 4"><path d="M0.3 0.2 L3.5 3.6 L6.7 0.2 Z" fill="#666"/></svg>
<div class="abs" style="left:3.7px;top:169.8px;width:215.5px;height:43.1px;border-radius:3px;background:#e3e4e3"></div>
<div class="row" style="top:93.0px;letter-spacing:0.09px">Svg-free-hearts-card-craftwi...</div>
<div class="row" style="top:138.3px;letter-spacing:0.09px">Svg-free-hearts-card-craftwi...</div>
<div class="row" style="top:183.8px">Svg-free-hearts-card-cra...</div>
<div class="row" style="top:229.1px;letter-spacing:0.09px">Svg-free-hearts-card-craftwi...</div>
<div class="row" style="top:274.4px;letter-spacing:0.09px">Svg-free-hearts-card-craftwi...</div>
<div class="row" style="top:319.8px;letter-spacing:0.09px">Svg-free-hearts-card-craftwi...</div>
<div class="row" style="top:365.1px;color:#c4c4c4">Svg-free-hearts-card-cra...</div>
<svg class="abs" style="left:30px;top:89px" width="16" height="20" viewBox="0 0 16 20"><rect x="0.9" y="0.9" width="14.2" height="18.2" fill="#fdf3f8" stroke="#cf3f88" stroke-width="1.1"/><path transform="translate(8.8 6.6) rotate(14) scale(3.4)" d="M0,-0.42 C0.10,-0.82 0.48,-1.04 0.80,-0.84 C1.12,-0.62 1.10,-0.12 0.82,0.26 C0.58,0.58 0.14,0.84 0,0.98 C-0.14,0.84 -0.58,0.58 -0.82,0.26 C-1.10,-0.12 -1.12,-0.62 -0.80,-0.84 C-0.48,-1.04 -0.10,-0.82 0,-0.42 Z" fill="#c2136d"/><path transform="translate(7.2 13.6) rotate(-10) scale(3.4)" d="M0,-0.42 C0.10,-0.82 0.48,-1.04 0.80,-0.84 C1.12,-0.62 1.10,-0.12 0.82,0.26 C0.58,0.58 0.14,0.84 0,0.98 C-0.14,0.84 -0.58,0.58 -0.82,0.26 C-1.10,-0.12 -1.12,-0.62 -0.80,-0.84 C-0.48,-1.04 -0.10,-0.82 0,-0.42 Z" fill="#c2136d"/><circle cx="8.8" cy="6.9" r="1" fill="#f5a9ca"/><circle cx="7.2" cy="13.9" r="1" fill="#f5a9ca"/></svg>
<svg class="abs" style="left:28.5px;top:135.6px" width="20" height="19" viewBox="0 0 20 19"><path transform="translate(10 9.6) rotate(8) scale(8.6 8.8)" d="M0,-0.42 C0.10,-0.82 0.48,-1.04 0.80,-0.84 C1.12,-0.62 1.10,-0.12 0.82,0.26 C0.58,0.58 0.14,0.84 0,0.98 C-0.14,0.84 -0.58,0.58 -0.82,0.26 C-1.10,-0.12 -1.12,-0.62 -0.80,-0.84 C-0.48,-1.04 -0.10,-0.82 0,-0.42 Z" fill="#f797c5"/></svg>
<svg class="abs" style="left:28.5px;top:181.2px" width="20" height="19" viewBox="0 0 20 19"><path transform="translate(10 9.6) rotate(8) scale(8.6 8.8)" d="M0,-0.42 C0.10,-0.82 0.48,-1.04 0.80,-0.84 C1.12,-0.62 1.10,-0.12 0.82,0.26 C0.58,0.58 0.14,0.84 0,0.98 C-0.14,0.84 -0.58,0.58 -0.82,0.26 C-1.10,-0.12 -1.12,-0.62 -0.80,-0.84 C-0.48,-1.04 -0.10,-0.82 0,-0.42 Z" fill="#f797c5"/></svg>
<svg class="abs" style="left:31px;top:226px" width="15" height="19" viewBox="0 0 15 19"><rect x="0.5" y="0.5" width="14" height="18" fill="#fde6f0" stroke="#e0579c" stroke-width="1"/><path transform="translate(8.4 6.2) rotate(14) scale(4.6)" d="M0,-0.42 C0.10,-0.82 0.48,-1.04 0.80,-0.84 C1.12,-0.62 1.10,-0.12 0.82,0.26 C0.58,0.58 0.14,0.84 0,0.98 C-0.14,0.84 -0.58,0.58 -0.82,0.26 C-1.10,-0.12 -1.12,-0.62 -0.80,-0.84 C-0.48,-1.04 -0.10,-0.82 0,-0.42 Z" fill="#d5308a"/><path transform="translate(6.6 13) rotate(-10) scale(4.6)" d="M0,-0.42 C0.10,-0.82 0.48,-1.04 0.80,-0.84 C1.12,-0.62 1.10,-0.12 0.82,0.26 C0.58,0.58 0.14,0.84 0,0.98 C-0.14,0.84 -0.58,0.58 -0.82,0.26 C-1.10,-0.12 -1.12,-0.62 -0.80,-0.84 C-0.48,-1.04 -0.10,-0.82 0,-0.42 Z" fill="#d5308a"/><path d="M1 1 h2.2 v17 h-2.2z M11.8 1 h2.2 v17 h-2.2z" fill="#e978b2" opacity="0.55"/></svg>
<svg class="abs" style="left:31px;top:271.2px" width="15" height="19" viewBox="0 0 15 19"><rect x="0.4" y="0.4" width="14.2" height="18.2" fill="#f773b6" stroke="#ee8fc0" stroke-width="0.8"/><path d="M1.6 1.6 h3.6 v6 h-3.6z M10 11 h3.4 v6.4 h-3.4z" fill="#fde3ef"/><path transform="translate(8.8 6.2) rotate(14) scale(4.4)" d="M0,-0.42 C0.10,-0.82 0.48,-1.04 0.80,-0.84 C1.12,-0.62 1.10,-0.12 0.82,0.26 C0.58,0.58 0.14,0.84 0,0.98 C-0.14,0.84 -0.58,0.58 -0.82,0.26 C-1.10,-0.12 -1.12,-0.62 -0.80,-0.84 C-0.48,-1.04 -0.10,-0.82 0,-0.42 Z" fill="#f5509f"/><path transform="translate(6.4 13) rotate(-10) scale(4.4)" d="M0,-0.42 C0.10,-0.82 0.48,-1.04 0.80,-0.84 C1.12,-0.62 1.10,-0.12 0.82,0.26 C0.58,0.58 0.14,0.84 0,0.98 C-0.14,0.84 -0.58,0.58 -0.82,0.26 C-1.10,-0.12 -1.12,-0.62 -0.80,-0.84 C-0.48,-1.04 -0.10,-0.82 0,-0.42 Z" fill="#f5509f"/></svg>
<svg class="abs" style="left:31px;top:316.7px" width="15" height="19" viewBox="0 0 15 19"><rect x="0.4" y="0.4" width="14.2" height="18.2" fill="#f5a5c9"/><path d="M3 3 h2 v2 h-2z M9 5 h2 v2 h-2z M5 9 h2 v2 h-2z M10 12 h2 v2 h-2z M3 14 h2 v2 h-2z" fill="#f9c6dd"/></svg>
<div class="abs" style="left:29.2px;top:365.4px;width:18.5px;height:12.8px;background:#dbdbdb"></div>

<svg class="abs" style="left:197.5px;top:185.5px" width="12" height="9" viewBox="0 0 12 9"><path d="M0.8 4.5 C3 0.6 9 0.6 11.2 4.5 C9 8.4 3 8.4 0.8 4.5 Z" fill="none" stroke="#333" stroke-width="1.2"/><circle cx="6" cy="4.5" r="1.7" fill="#333"/></svg>
<svg class="abs" style="left:197.5px;top:366.5px" width="12" height="10" viewBox="0 0 12 10"><path d="M0.8 5 C3 1.1 9 1.1 11.2 5 C9 8.9 3 8.9 0.8 5 Z" fill="none" stroke="#9a9a9a" stroke-width="1.1"/><circle cx="6" cy="5" r="1.5" fill="none" stroke="#9a9a9a" stroke-width="1"/><path d="M1.6 0.8 L10.4 9.2" stroke="#9a9a9a" stroke-width="1.1"/></svg>
<div class="abs" style="left:0;top:695px;width:235px;height:40px;background:#f1f1f1"></div>
<div class="abs" style="left:8.3px;top:701.2px;width:42px;height:28.5px;background:#fff;border:1.2px solid #a3a3a3;border-radius:2.5px"></div>
<div class="abs" style="left:58px;top:710px;font-size:8px;line-height:10px;color:#4a4a4a">Blank Canvas</div>
<svg class="abs" style="left:14.5px;top:739px" width="15" height="16" viewBox="0 0 15 16"><circle cx="6" cy="6" r="4.8" fill="none" stroke="#cdcdcd" stroke-width="1.2"/><path d="M7 7.2 H13.8 V14.8 H6.4 V10.6" fill="none" stroke="#cdcdcd" stroke-width="1.2"/></svg>
<svg class="abs" style="left:49px;top:739px" width="15" height="16" viewBox="0 0 15 16"><rect x="0.8" y="1" width="8.2" height="8.2" rx="1.2" fill="none" stroke="#cdcdcd" stroke-width="1.2"/><circle cx="9.2" cy="9.6" r="4.8" fill="none" stroke="#cdcdcd" stroke-width="1.2"/></svg>
<svg class="abs" style="left:68.5px;top:745px" width="6" height="4" viewBox="0 0 6 4"><path d="M0.2 0.2 L3 3.6 L5.8 0.2 Z" fill="#cdcdcd"/></svg>
<svg class="abs" style="left:94px;top:741.5px" width="17" height="10" viewBox="0 0 17 10"><path d="M12.4 3.4 H5.6 C3.2 3.4 3.2 6.8 5.6 6.8 H12 C16.4 6.8 16.4 0.8 12 0.8 H5 C-0.4 0.8 -0.4 9.2 5 9.2 H11.4" fill="none" stroke="#cdcdcd" stroke-width="1.2"/></svg>
<svg class="abs" style="left:131.5px;top:739px" width="16" height="16" viewBox="0 0 16 16"><path d="M8 0.6 V5.4 M5.6 3.4 L8 5.8 L10.4 3.4" fill="none" stroke="#cdcdcd" stroke-width="1.1"/><path d="M1.4 6.4 L8 10.4 L14.6 6.4 M1.4 10.4 L8 14.6 L14.6 10.4" fill="none" stroke="#cdcdcd" stroke-width="1.2"/></svg>
<svg class="abs" style="left:171px;top:739px" width="17" height="17" viewBox="0 0 17 17"><circle cx="8.5" cy="8" r="7.2" fill="none" stroke="#cdcdcd" stroke-width="1.3" stroke-dasharray="3 2"/></svg>
<div class="bl" style="left:-2.8999999999999986px;width:50px">Slice</div>
<div class="bl" style="left:35.6px;width:50px">Combine</div>
<div class="bl" style="left:77.2px;width:50px">Attach</div>
<div class="bl" style="left:114.30000000000001px;width:50px">Flatten</div>
<div class="bl" style="left:154.3px;width:50px">Contour</div>
</div>
<div class="abs" style="left:88px;top:764.5px;width:83px;height:22.5px;border-radius:6px;background:rgba(225,225,225,0.85)"></div>
<div class="abs" style="left:105.6px;top:767px;font-size:15.5px;line-height:18px;color:#b4b4b4">100%</div>
<svg class="abs" style="left:150px;top:767px" width="18" height="18" viewBox="0 0 18 18"><circle cx="9" cy="9" r="7.2" fill="none" stroke="#b9b9b9" stroke-width="1.2"/><path d="M9 5 V13 M5 9 H13" stroke="#b9b9b9" stroke-width="1.3"/></svg>
<svg class="abs" style="left:0;top:690px" width="150" height="119" viewBox="0 690 150 119">
<ellipse cx="74" cy="749" rx="64" ry="49.9" fill="#c9381d"/>
<g fill="#fff" font-family="Liberation Serif, serif" font-style="italic">
<text x="25" y="749" font-size="45" textLength="69" lengthAdjust="spacingAndGlyphs">Craft</text>
<text x="35" y="778.3" font-size="43" textLength="79" lengthAdjust="spacingAndGlyphs">Sarah</text>
</g>
<text x="100" y="739.4" font-family="Liberation Serif, serif" font-weight="bold" font-size="8.2" fill="#fff" textLength="25" lengthAdjust="spacingAndGlyphs">WITH</text>
<g fill="none" stroke="#fff" stroke-linecap="round">
<path d="M101 746 C104 742.5 109 743 113 744.6 C118 746.6 123 745.5 126 741.2" stroke-width="1.5"/>
<path d="M106 766 C112 752 122 750 120.5 756.5 C119.5 761 112 760 100 754.5 C92 751 84 750.5 80.5 755 C78.5 758 81 761.5 84.5 760.5 C87 759.5 87 756.5 85 756" stroke-width="1"/>
<path d="M47 757 C40 760 35 767 35 773 C35 779 40 783 44.5 782 C47.5 781.2 48 778 46 777" stroke-width="0.9"/>
<path d="M70 756 C68 757.5 68 760 70 760.5 C73 761 76 757 78 750" stroke-width="0.9"/>
</g>
</svg>
<svg class="abs" style="left:1090px;top:384px" width="198" height="46" viewBox="1090 384 198 46"><path d="M1093.8 402.2 H1244.2 V387 L1283.6 406.3 L1244.2 426.2 V410.7 H1093.8 Z" fill="#c9381d"/></svg>
<svg class="abs" style="left:1376px;top:211px" width="32" height="38" viewBox="1376 211 32 38"><path d="M1387.8 217.4 C1387.8 214.9 1391.4 214.9 1391.4 217.4 L1391.4 224.6 C1391.7 223 1394.9 223 1395.1 224.9 C1395.5 223.4 1398.6 223.6 1398.8 225.5 C1399.3 224.2 1402.9 224.6 1403.1 226.7 L1403.3 236 C1403.3 242 1400 245.7 1395.5 245.7 C1391 245.7 1389 243.6 1387 241 L1380.7 233.7 C1379.4 232 1381.7 230 1383.4 231.5 L1387.8 235.6 Z" fill="#000" stroke="#fff" stroke-width="1.3" stroke-linejoin="round"/><path d="M1391.9 224.5 V231.5 M1395.3 225 V231.5 M1399 225.8 V231.5" stroke="#fff" stroke-width="0.7"/></svg>

</body>
</html>
